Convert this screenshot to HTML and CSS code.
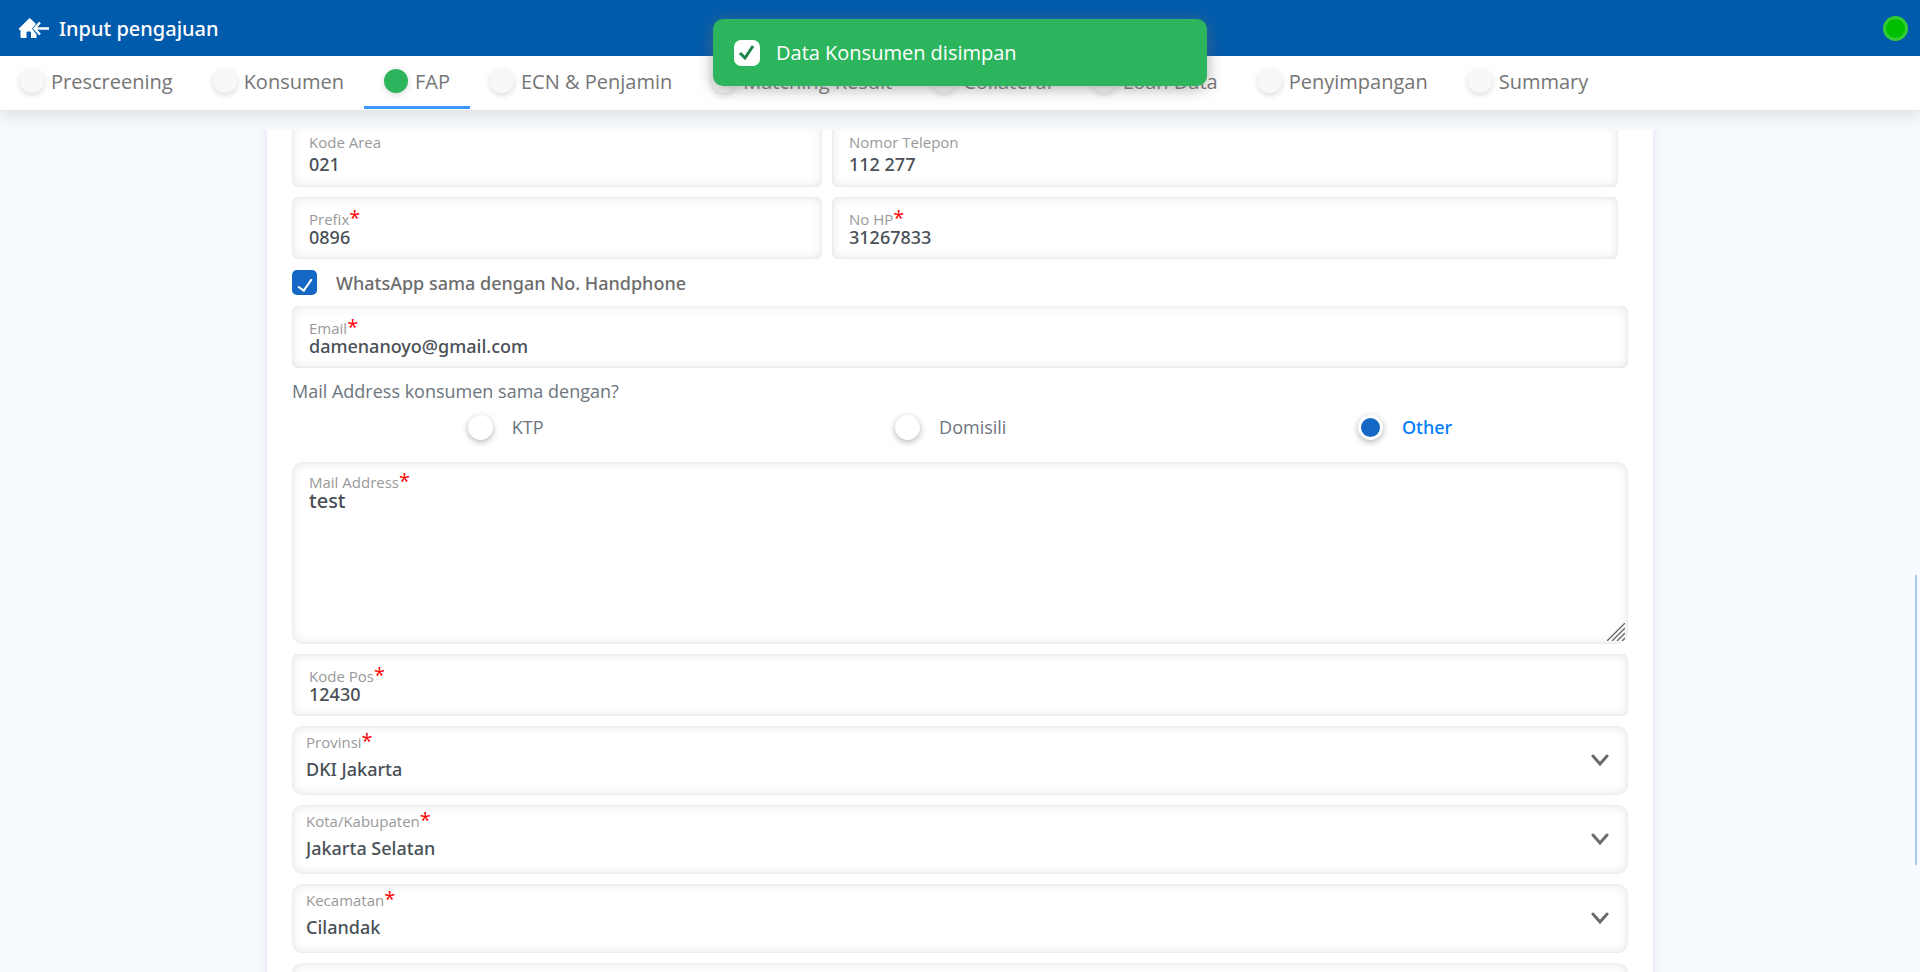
FILE: index.html
```html
<!DOCTYPE html>
<html lang="id">
<head>
<meta charset="utf-8">
<title>Input pengajuan</title>
<link rel="stylesheet" href="styles.css">
</head>
<body>
<header class="topbar">
  <a class="back" href="#" aria-label="Kembali ke beranda">
    <svg width="32" height="24" viewBox="0 0 32 24"><path fill="#fff" d="M1 12.500 11 2.500q.7-.6 1.400 0L18 8l-4 4.500 4.500 6V22H13v-5.500q0-1-1-1h-2.500q-1 0-1 1V22H3.500q-1 0-1-1v-7H1.400q-1-.6-.4-1.500z"/><path d="M22 6.500l-5.500 6 5.500 6M17 12.500h14" fill="none" stroke="#fff" stroke-width="2.400"/></svg>
  </a>
  <h1 class="title">Input pengajuan</h1>
  <span class="status" role="img" aria-label="Online"></span>
</header>
<nav class="tabs">
  <a class="tab" href="#"><span class="dot"></span>Prescreening</a>
  <a class="tab" href="#"><span class="dot"></span>Konsumen</a>
  <a class="tab active" href="#" aria-current="page"><span class="dot"></span>FAP</a>
  <a class="tab" href="#"><span class="dot"></span>ECN &amp; Penjamin</a>
  <a class="tab" href="#"><span class="dot"></span>Matching Result</a>
  <a class="tab" href="#"><span class="dot"></span>Collateral</a>
  <a class="tab" href="#"><span class="dot"></span>Loan Data</a>
  <a class="tab" href="#"><span class="dot"></span>Penyimpangan</a>
  <a class="tab" href="#"><span class="dot"></span>Summary</a>
</nav>
<main class="viewport">
  <form class="card">
    <div class="pair">
      <div class="field plain"><label for="area">Kode Area</label><input id="area" value="021"></div>
      <div class="field plain"><label for="telp">Nomor Telepon</label><input id="telp" value="112 277"></div>
    </div>
    <div class="pair">
      <div class="field"><label for="prefix">Prefix<b>*</b></label><input id="prefix" value="0896"></div>
      <div class="field"><label for="hp">No HP<b>*</b></label><input id="hp" value="31267833"></div>
    </div>
    <div class="check"><input type="checkbox" id="wa" checked><label for="wa">WhatsApp sama dengan No. Handphone</label></div>
    <div class="field"><label for="email">Email<b>*</b></label><input id="email" value="damenanoyo@gmail.com"></div>
    <fieldset class="choice">
      <legend>Mail Address konsumen sama dengan?</legend>
      <div class="options">
        <div class="option"><input type="radio" name="mail" id="ktp"><label for="ktp">KTP</label></div>
        <div class="option"><input type="radio" name="mail" id="dom"><label for="dom">Domisili</label></div>
        <div class="option"><input type="radio" name="mail" id="oth" checked><label for="oth">Other</label></div>
      </div>
    </fieldset>
    <div class="field area"><label for="addr">Mail Address<b>*</b></label><textarea id="addr">test</textarea>
      <svg class="grip" width="18" height="18" viewBox="0 0 18 18"><path d="M0 18 18 0M5 18 18 5M10 18l8-8M15 18l3-3" stroke="#666" stroke-width="1.300"/></svg>
    </div>
    <div class="field"><label for="pos">Kode Pos<b>*</b></label><input id="pos" value="12430"></div>
    <div class="field pick"><label for="prov">Provinsi<b>*</b></label><select id="prov"><option>DKI Jakarta</option></select><svg class="chev" width="18" height="13" viewBox="0 0 18 13"><path d="M2 2l7 8 7-8" fill="none" stroke="#6b6b6b" stroke-width="3" stroke-linecap="round"/></svg></div>
    <div class="field pick"><label for="kota">Kota/Kabupaten<b>*</b></label><select id="kota"><option>Jakarta Selatan</option></select><svg class="chev" width="18" height="13" viewBox="0 0 18 13"><path d="M2 2l7 8 7-8" fill="none" stroke="#6b6b6b" stroke-width="3" stroke-linecap="round"/></svg></div>
    <div class="field pick"><label for="kec">Kecamatan<b>*</b></label><select id="kec"><option>Cilandak</option></select><svg class="chev" width="18" height="13" viewBox="0 0 18 13"><path d="M2 2l7 8 7-8" fill="none" stroke="#6b6b6b" stroke-width="3" stroke-linecap="round"/></svg></div>
    <div class="field pick"></div>
  </form>
</main>
<div class="scroll-thumb"></div>
<div class="toast" role="status">
  <svg width="26" height="26" viewBox="0 0 26 26"><rect width="26" height="26" rx="7" fill="#fff"/><path d="M6 13l5 5 8-12" fill="none" stroke="#1d8348" stroke-width="3"/></svg>
  <span>Data Konsumen disimpan</span>
</div>
</body>
</html>
```
FILE: styles.css
```css
* { box-sizing: border-box; }
body {
  margin: 0;
  height: 100vh;
  overflow: hidden;
  display: flex;
  flex-direction: column;
  background: #f7fbff;
  color: #495057;
  font-family: "Open Sans", "Noto Sans", sans-serif;
  font-size: 18px;
}
.topbar {
  flex: none;
  height: 56px;
  padding: 0 12px 0 18px;
  display: flex;
  align-items: center;
  gap: 9px;
  background: #005bac;
  color: #fff;
}
.back, .back svg { display: block; }
.title { margin: 0; font: 500 20px "Noto Sans", sans-serif; }
.status {
  width: 25px;
  height: 25px;
  margin-left: auto;
  border: 3px solid #33cc33;
  border-radius: 50%;
  background: #00be00;
}
.tabs {
  flex: none;
  height: 55px;
  padding-bottom: 1px;
  display: flex;
  background: #fff;
  border-bottom: 1px solid #e6e6e6;
  box-shadow: 0 6px 16px rgba(0, 0, 0, .1);
}
.tab {
  display: flex;
  align-items: center;
  gap: 7px;
  padding: 0 20px;
  border-bottom: 3px solid transparent;
  color: #757575;
  font-size: 20px;
  text-decoration: none;
  white-space: nowrap;
}
.tab.active { border-color: #3e97ff; }
.dot {
  width: 24px;
  height: 24px;
  border-radius: 50%;
  background: #f8f8f8;
  box-shadow: 0 2px 6px rgba(0, 0, 0, .15);
}
.active .dot { background: #2db55d; }
.viewport {
  flex: 1;
  min-height: 0;
  margin-top: 19px;
  padding: 0 267px;
  overflow: hidden;
}
.card {
  padding: 0 25px 25px;
  margin-top: -6px;
  display: flex;
  flex-direction: column;
  gap: 10px;
  background: #fff;
  box-shadow: 0 0 16px rgba(0, 0, 80, .08);
}
.pair {
  display: grid;
  grid-template-columns: 530fr 786fr;
  gap: 10px;
  margin-right: 10px;
}
.field {
  position: relative;
  min-height: 62px;
  padding: 12px 16px 6px;
  display: flex;
  flex-direction: column;
  background: #fff;
  border: 1px solid #ececec;
  border-radius: 5px;
  box-shadow: inset 0 0 10px rgba(0, 0, 0, .1);
}
.field label {
  color: #999;
  font-size: 15px;
  line-height: 18px;
}
.field b {
  color: #f00;
  font-size: 20px;
  font-weight: 400;
  line-height: 14px;
}
.field input, .field textarea, .field select {
  width: 100%;
  margin: -3px 0 0;
  padding: 0;
  border: 0;
  outline: 0;
  background: transparent;
  color: #495057;
  font: 500 18px/24px "Noto Sans", sans-serif;
}
.field.plain { min-height: 63px; padding-top: 8px; }
.field.plain input { margin-top: 1px; }
.check {
  display: flex;
  align-items: center;
  gap: 19px;
  height: 27px;
  color: #6c6c6c;
  font: 500 18px "Noto Sans", sans-serif;
}
.check input {
  appearance: none;
  width: 25px;
  height: 25px;
  margin: 0;
  padding-top: 1px;
  border-radius: 5px;
  background: #1467c5;
  display: grid;
  place-items: center;
}
.check input::after {
  content: "";
  width: 6px;
  height: 13px;
  border: solid #fff;
  border-width: 0 2px 2px 0;
  transform: rotate(35deg);
}
.choice { margin: 0; padding: 0; border: 0; color: #6c757d; }
.choice legend { padding: 0; line-height: 26px; }
.options { display: flex; justify-content: space-around; padding: 10px 0 12px; }
.option { display: flex; align-items: center; gap: 19px; line-height: 26px; }
.option input {
  appearance: none;
  width: 25px;
  height: 25px;
  margin: 0;
  border: 3px solid #fff;
  border-radius: 50%;
  background: #fff;
  box-shadow: 0 2px 6px rgba(0, 0, 0, .3);
}
.option input:checked { background: #1467c5; }
.option input:checked + label { color: #007bff; font: 500 18px "Noto Sans", sans-serif; }
.field.area { min-height: 182px; padding-top: 10px; border-radius: 10px; }
.field textarea { height: 140px; margin-top: -2px; resize: none; font-size: 20px; }
.grip { position: absolute; right: 2px; bottom: 2px; }
.field.pick { min-height: 69px; padding: 6px 13px; border-radius: 10px; }
.field select { appearance: none; margin-top: 6px; }
.chev { position: absolute; right: 18px; top: 27px; }
.scroll-thumb {
  position: absolute;
  right: 3px;
  top: 575px;
  width: 2px;
  height: 290px;
  background: #a5cbec;
}
.toast {
  position: absolute;
  top: 19px;
  left: 50%;
  margin-left: -247px;
  width: 494px;
  height: 67px;
  padding: 0 21px;
  display: flex;
  align-items: center;
  gap: 16px;
  border-radius: 10px;
  background: #2db55d;
  box-shadow: 0 2px 16px rgba(110, 110, 110, .6);
  color: #fff;
  font-size: 20px;
}
```
